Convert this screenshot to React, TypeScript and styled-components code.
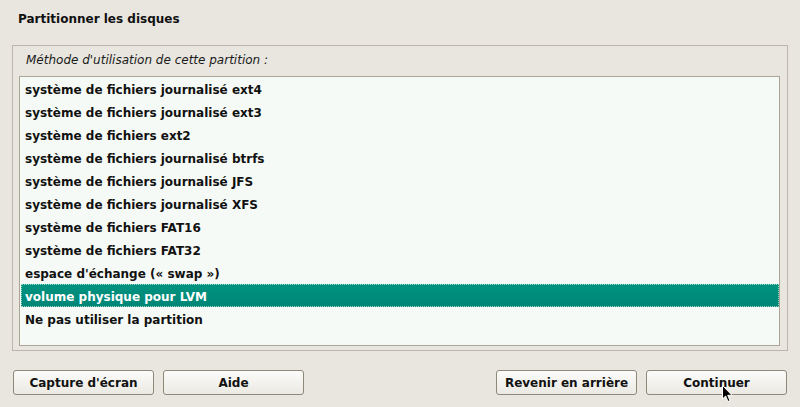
import React from "react";
import styled, { createGlobalStyle } from "styled-components";

const Global = createGlobalStyle`
  html, body { margin: 0; padding: 0; background: #e8e6df; }
  body { font-family: "DejaVu Sans", "Liberation Sans", sans-serif; font-size: 12px; color: #1a1a1a; }
  * { box-sizing: border-box; }
`;

const Page = styled.div`
  position: relative;
  width: 800px;
  height: 407px;
  background: #e8e6df;
  display: flex;
  flex-direction: column;
  padding: 11px 12px 0 12px;
  overflow: hidden;
`;

const Title = styled.div`
  font-weight: bold;
  line-height: 16px;
  padding-left: 6px;
  color: #111;
`;

const Frame = styled.div`
  margin-top: 18px;
  border: 1px solid #bcb6a8;
  padding: 6px 7px 4px 6px;
  display: flex;
  flex-direction: column;
`;

const Label = styled.div`
  font-style: italic;
  line-height: 16px;
  padding-left: 7px;
  margin-bottom: 8px;
  color: #1a1a1a;
`;

const List = styled.div`
  height: 270px;
  border: 1px solid #aca595;
  background: #f6faf6;
  display: flex;
  flex-direction: column;
`;

const Row = styled.div<{ $selected?: boolean }>`
  flex: none;
  height: 23px;
  line-height: 23px;
  padding-top: 2px;
  margin-left: 1px;
  padding-left: 4px;
  font-weight: bold;
  white-space: nowrap;
  color: ${(p) => (p.$selected ? "#ffffff" : "#111")};
  background: ${(p) => (p.$selected ? "linear-gradient(#00937f, #008577)" : "transparent")};
  outline: ${(p) => (p.$selected ? "1px dotted #9ad6cc" : "none")};
  outline-offset: -1px;
`;

const ButtonBar = styled.div`
  margin-top: 19px;
  padding: 0 1px;
  display: flex;
  justify-content: space-between;
`;

const Group = styled.div`
  display: flex;
  gap: 9px;
`;

const Button = styled.div`
  width: 141px;
  height: 25px;
  border: 1px solid #8d8877;
  border-radius: 3px;
  background: linear-gradient(#fbfbf9, #ebe9e3);
  display: flex;
  align-items: center;
  justify-content: center;
  font-weight: bold;
  color: #111;
`;

const Cursor = styled.svg`
  position: absolute;
  left: 722px;
  top: 385px;
`;

const items = [
  "système de fichiers journalisé ext4",
  "système de fichiers journalisé ext3",
  "système de fichiers ext2",
  "système de fichiers journalisé btrfs",
  "système de fichiers journalisé JFS",
  "système de fichiers journalisé XFS",
  "système de fichiers FAT16",
  "système de fichiers FAT32",
  "espace d'échange (« swap »)",
  "volume physique pour LVM",
  "Ne pas utiliser la partition",
];

export default function App() {
  return (
    <Page>
      <Global />
      <Title>Partitionner les disques</Title>
      <Frame>
        <Label>Méthode d'utilisation de cette partition :</Label>
        <List>
          {items.map((t, i) => (
            <Row key={t} $selected={i === 9}>
              {t}
            </Row>
          ))}
        </List>
      </Frame>
      <ButtonBar>
        <Group>
          <Button>Capture d'écran</Button>
          <Button>Aide</Button>
        </Group>
        <Group>
          <Button>Revenir en arrière</Button>
          <Button>Continuer</Button>
        </Group>
      </ButtonBar>
      <Cursor width="12" height="18" viewBox="0 0 12 18">
        <path d="M0.5 0.5 L0.5 14 L3.6 11 L6 16.5 L8 15.6 L5.7 10.3 L10 10.3 Z" fill="#000" stroke="#fff" strokeWidth="1" />
      </Cursor>
    </Page>
  );
}
